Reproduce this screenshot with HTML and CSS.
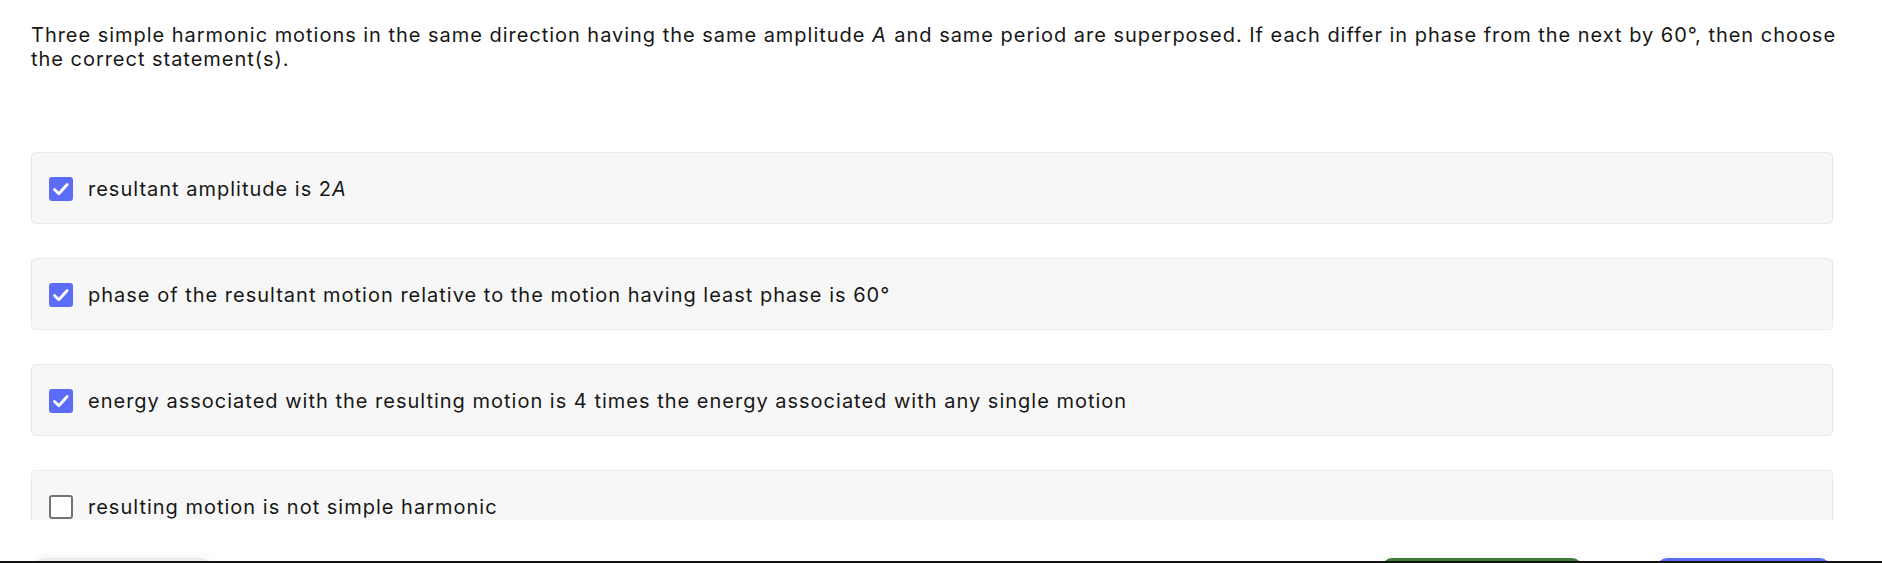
FILE: index.html
```html
<!DOCTYPE html>
<html lang="en">
<head>
<meta charset="utf-8">
<title>Question</title>
<link rel="stylesheet" href="styles.css">
</head>
<body>
<div class="page">
  <main class="scroll">
    <p class="question">Three simple harmonic motions in the same direction having the same amplitude <em>A</em> and same period are superposed. If each differ in phase from the next by 60°, then choose the correct statement(s).</p>
    <ul class="options">
      <li class="option">
        <span class="box checked"><svg viewBox="0 0 24 24" width="24" height="24"><path d="M5.5 12.5l4.3 4.3 8.4-9.3" fill="none" stroke="#fff" stroke-width="2.8" stroke-linecap="round" stroke-linejoin="round"/></svg></span>
        <span class="label">resultant amplitude is 2<em>A</em></span>
      </li>
      <li class="option">
        <span class="box checked"><svg viewBox="0 0 24 24" width="24" height="24"><path d="M5.5 12.5l4.3 4.3 8.4-9.3" fill="none" stroke="#fff" stroke-width="2.8" stroke-linecap="round" stroke-linejoin="round"/></svg></span>
        <span class="label">phase of the resultant motion relative to the motion having least phase is 60°</span>
      </li>
      <li class="option">
        <span class="box checked"><svg viewBox="0 0 24 24" width="24" height="24"><path d="M5.5 12.5l4.3 4.3 8.4-9.3" fill="none" stroke="#fff" stroke-width="2.8" stroke-linecap="round" stroke-linejoin="round"/></svg></span>
        <span class="label">energy associated with the resulting motion is 4 times the energy associated with any single motion</span>
      </li>
      <li class="option">
        <span class="box"></span>
        <span class="label">resulting motion is not simple harmonic</span>
      </li>
    </ul>
  </main>
  <footer class="footer">
    <button class="btn btn-light">Previous</button>
    <div class="actions">
      <button class="btn btn-green">Save &amp; Next</button>
      <button class="btn btn-blue">Submit</button>
    </div>
  </footer>
  <div class="bottom-bar"></div>
</div>
</body>
</html>
```

FILE: styles.css
```css
* { box-sizing: border-box; }
html, body { margin: 0; padding: 0; background: #fff; }
body {
  font-family: Inter, "Noto Sans", "Liberation Sans", sans-serif;
  color: #171717;
  width: 1882px;
  height: 563px;
  overflow: hidden;
}
.page {
  display: flex;
  flex-direction: column;
  height: 563px;
}
.scroll {
  height: 520px;
  overflow: hidden;
  padding: 23px 49px 0 31px;
  flex: none;
}
.question {
  margin: 0 -17px 0 0;
  font-size: 20px;
  line-height: 24px;
  letter-spacing: 0.97px;
}
.question em, .label em { font-style: italic; padding-right: 1px; }
.options {
  list-style: none;
  margin: 81px 0 0;
  padding: 0;
  display: flex;
  flex-direction: column;
  gap: 34px;
}
.option {
  display: flex;
  align-items: center;
  gap: 15px;
  padding: 22px 17px 20px;
  background: #f7f7f7;
  border: 1px solid #e9e9e9;
  border-radius: 5px;
  font-size: 20px;
  line-height: 28px;
  letter-spacing: 1px;
}
.box {
  flex: none;
  width: 24px;
  height: 24px;
  border-radius: 3px;
  border: 2px solid #737373;
  background: #fff;
  display: flex;
  align-items: center;
  justify-content: center;
}
.box.checked {
  background: #5b6cf6;
  border-color: #5b6cf6;
}
.box svg { display: block; flex: none; }
.footer {
  flex: 1;
  overflow: hidden;
  display: flex;
  justify-content: space-between;
  align-items: flex-start;
  padding: 38px 52px 0 35px;
}
.actions {
  display: flex;
  gap: 75px;
}
.btn {
  font-family: inherit;
  font-size: 18px;
  height: 48px;
  border-radius: 10px;
  border: 1px solid transparent;
  box-shadow: 0 -3px 10px rgba(0,0,0,0.04);
}
.btn-light {
  width: 175px;
  background: #efefef;
  border-color: #e6e6e6;
}
.btn-green {
  width: 200px;
  background: #3f7a39;
  color: #fff;
}
.btn-blue {
  width: 173px;
  background: #5b6cf6;
  color: #fff;
}
.bottom-bar {
  height: 2px;
  background: #111;
  flex: none;
}
```
